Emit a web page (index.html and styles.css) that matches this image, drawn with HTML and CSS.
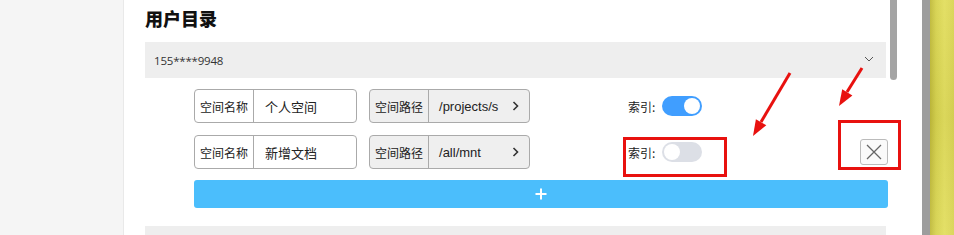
FILE: index.html
```html
<!DOCTYPE html>
<html lang="zh">
<head>
<meta charset="utf-8">
<link rel="stylesheet" href="styles.css">
</head>
<body>
<div class="app">
  <aside class="sidebar"></aside>
  <main class="panel">
    <section class="content">
      <h2 class="title">用户目录</h2>
      <div class="user-bar">
        <span class="user-name">155****9948</span>
        <svg class="chev-down" width="10" height="6" viewBox="0 0 10 6"><path d="M1 1 L5 5 L9 1" fill="none" stroke="#555" stroke-width="1"/></svg>
      </div>
      <div class="rows">
        <div class="row">
          <div class="group">
            <span class="g-label">空间名称</span>
            <span class="g-value">个人空间</span>
          </div>
          <div class="group disabled">
            <span class="g-label">空间路径</span>
            <span class="g-value path">/projects/s</span>
            <svg class="chev-right" width="7" height="10" viewBox="0 0 7 10"><path d="M1.5 1 L5.5 5 L1.5 9" fill="none" stroke="#333" stroke-width="1.6"/></svg>
          </div>
          <div class="index">
            <span class="i-label">索引:</span>
            <span class="switch on"><span class="knob"></span></span>
          </div>
        </div>
        <div class="row">
          <div class="group">
            <span class="g-label">空间名称</span>
            <span class="g-value">新增文档</span>
          </div>
          <div class="group disabled">
            <span class="g-label">空间路径</span>
            <span class="g-value path">/all/mnt</span>
            <svg class="chev-right" width="7" height="10" viewBox="0 0 7 10"><path d="M1.5 1 L5.5 5 L1.5 9" fill="none" stroke="#333" stroke-width="1.6"/></svg>
          </div>
          <div class="index">
            <span class="i-label">索引:</span>
            <span class="switch"><span class="knob"></span></span>
          </div>
          <button class="close">
            <svg width="18" height="18" viewBox="0 0 18 18"><path d="M2 2 L16 16 M16 2 L2 16" stroke="#666" stroke-width="1.3" fill="none"/></svg>
          </button>
        </div>
        <button class="add">
          <svg width="12" height="12" viewBox="0 0 12 12"><path d="M6 0.5 V11.5 M0.5 6 H11.5" stroke="#fff" stroke-width="2"/></svg>
        </button>
      </div>
      <div class="user-bar next"></div>
    </section>
    <div class="scroll-track"><div class="scroll-thumb"></div></div>
  </main>
  <div class="divider-strip"></div>
  <div class="photo"></div>
</div>
<svg class="annotations" width="954" height="235" viewBox="0 0 954 235">
  <g stroke="#e8110f" fill="none" stroke-width="3">
    <line x1="790" y1="73" x2="761" y2="122"/>
    <line x1="862" y1="68" x2="847" y2="92"/>
    <rect x="624.5" y="138.5" width="101" height="37"/>
    <rect x="839.5" y="121.5" width="60" height="47"/>
  </g>
  <g fill="#e8110f">
    <polygon points="753,136 766.3,125.2 755.9,119.2"/>
    <polygon points="839,106 852.4,95.4 842.2,89.2"/>
  </g>
</svg>
</body>
</html>
```
FILE: styles.css
```css
* { box-sizing: border-box; }
html, body { margin: 0; padding: 0; }
body {
  width: 954px;
  height: 235px;
  overflow: hidden;
  font-family: "Liberation Sans", "Noto Sans CJK SC", sans-serif;
  color: #222;
  position: relative;
}
.app {
  display: flex;
  height: 235px;
}
.sidebar {
  width: 124px;
  flex: none;
  background: #f5f5f5;
  border-right: 1px solid #e9e9e9;
}
.panel {
  width: 798px;
  flex: none;
  background: #fff;
  display: flex;
  padding-left: 21px;
}
.content {
  width: 741px;
  flex: none;
}
.title {
  margin: 0;
  padding-top: 6px;
  height: 42px;
  font-size: 18px;
  line-height: 24px;
  font-weight: 900;
  color: #111;
  font-family: "Noto Sans CJK SC", sans-serif;
}
.user-bar {
  height: 36px;
  background: #eeeeee;
  display: flex;
  align-items: center;
  justify-content: space-between;
  padding: 0 12px 0 9px;
}
.user-name {
  font-family: "Open Sans", "Noto Sans", sans-serif;
  font-size: 11.5px;
  color: #333;
  letter-spacing: -0.2px;
}
.chev-down { margin-top: -3px; }
.user-bar.next {
  margin-top: 18px;
  height: 9px;
}
.rows {
  padding-left: 49px;
  padding-top: 11px;
  margin-right: -2px;
  display: flex;
  flex-direction: column;
  gap: 12px;
}
.row {
  display: flex;
  align-items: center;
  height: 34px;
}
.group {
  display: flex;
  align-items: stretch;
  height: 34px;
  width: 163px;
  border: 1px solid #aaa;
  border-radius: 4px;
  background: #fff;
  margin-right: 12px;
  overflow: hidden;
}
.group.disabled {
  width: 161px;
  background: #efefef;
}
.g-label {
  display: flex;
  align-items: center;
  padding: 0 5px;
  border-right: 1px solid #aaa;
  font-family: "Noto Sans CJK SC", sans-serif;
  font-size: 12px;
  color: #222;
}
.g-value {
  display: flex;
  align-items: center;
  padding-left: 11px;
  font-family: "Noto Sans CJK SC", sans-serif;
  font-size: 13px;
  color: #222;
  flex: 1;
}
.g-value.path {
  font-family: "Liberation Sans", sans-serif;
  padding-left: 10px;
}
.chev-right {
  align-self: center;
  margin-right: 10px;
}
.index {
  display: flex;
  align-items: center;
  margin-left: 86px;
}
.i-label {
  font-family: "Noto Sans CJK SC", sans-serif;
  font-size: 12px;
  color: #222;
  margin-right: 7px;
}
.switch {
  width: 40px;
  height: 20px;
  border-radius: 10px;
  background: #dcdfe6;
  position: relative;
  display: inline-block;
}
.switch.on { background: #409eff; }
.knob {
  position: absolute;
  top: 2px;
  left: 2px;
  width: 16px;
  height: 16px;
  border-radius: 50%;
  background: #fff;
}
.switch.on .knob { left: 22px; }
.close {
  margin-left: auto;
  width: 28px;
  height: 26px;
  padding: 0;
  border: 1px solid #bbb;
  border-radius: 3px;
  background: #fafafa;
  display: flex;
  align-items: center;
  justify-content: center;
}
.add {
  height: 28px;
  width: 100%;
  border: none;
  border-radius: 3px;
  background: #4bbefc;
  display: flex;
  align-items: center;
  justify-content: center;
  padding: 0;
  margin-top: -1px;
}
.scroll-track {
  width: 7px;
  margin-left: 4px;
  flex: none;
}
.scroll-thumb {
  height: 80px;
  background: #a4a4a4;
  border-radius: 0 0 4px 4px;
}
.divider-strip {
  width: 8px;
  flex: none;
  background: #9d9d9d;
}
.photo {
  flex: 1;
  background:
    linear-gradient(180deg, rgba(255,255,255,0.05), rgba(0,0,0,0.03) 50%, rgba(255,255,255,0.06)),
    linear-gradient(90deg, #bfb93a 0%, #d6d24e 25%, #e2de5e 60%, #d9d454 100%);
}
.annotations {
  position: absolute;
  left: 0;
  top: 0;
  pointer-events: none;
}
```
